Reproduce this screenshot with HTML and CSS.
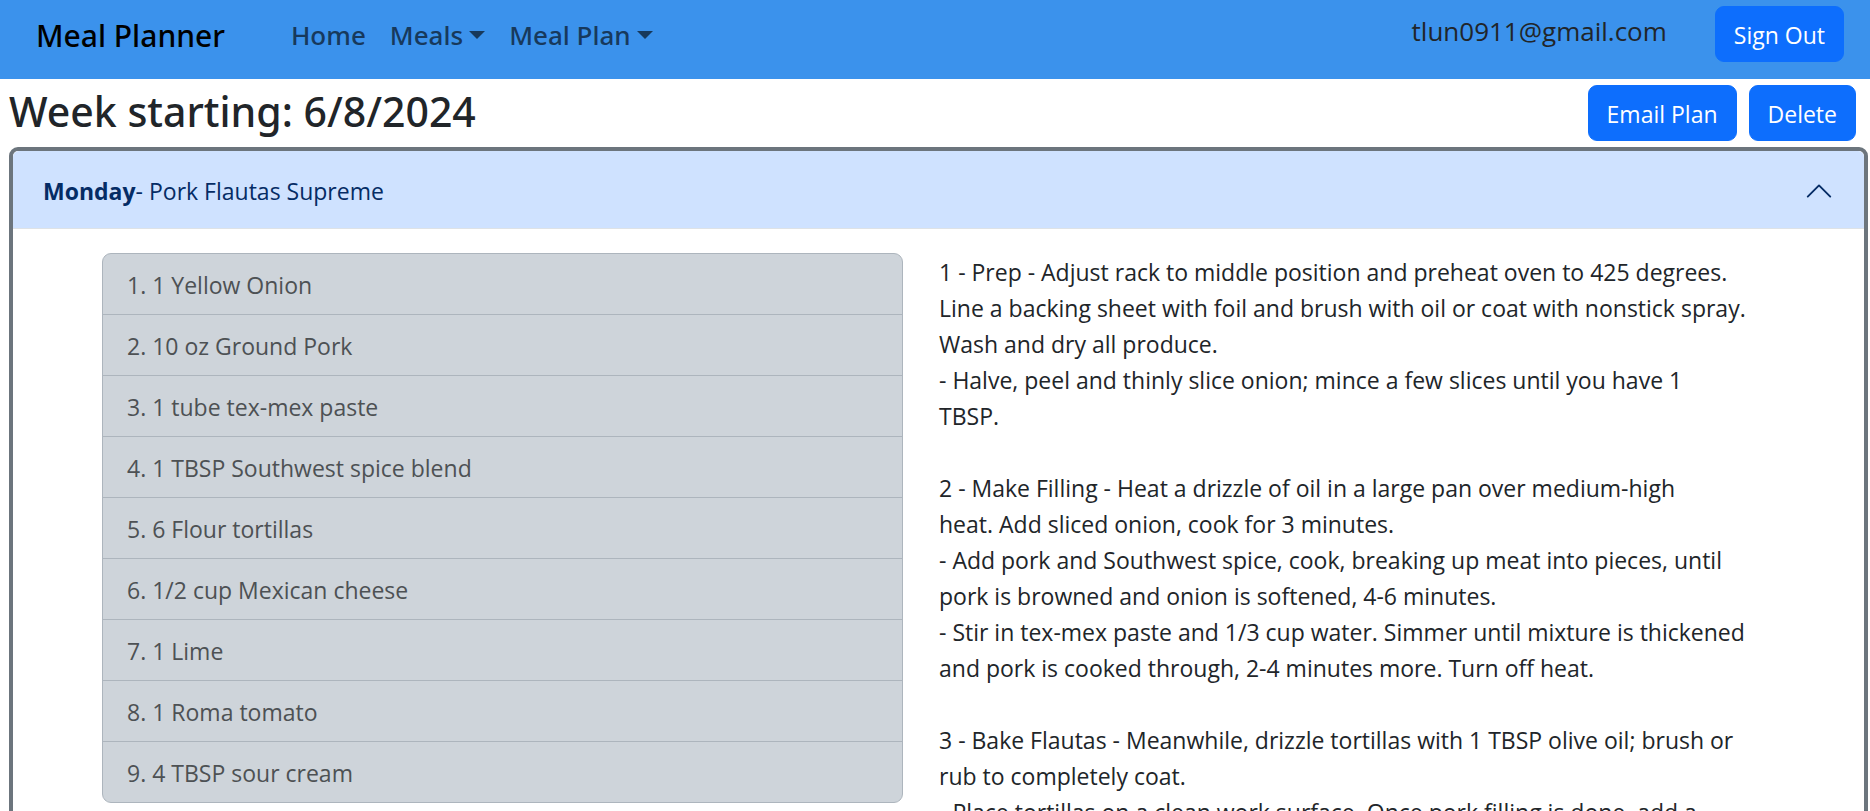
FILE: index.html
```html
<!DOCTYPE html>
<html lang="en">
<head>
<meta charset="utf-8">
<meta name="viewport" content="width=device-width, initial-scale=1">
<title>Meal Planner</title>
<link rel="stylesheet" href="styles.css">
</head>
<body>
<header class="navbar">
  <a class="brand" href="#">Meal Planner</a>
  <nav class="nav-links">
    <a class="nav-link" href="#">Home</a>
    <button class="nav-link dropdown" type="button">Meals</button>
    <button class="nav-link dropdown" type="button">Meal Plan</button>
  </nav>
  <span class="user-email">tlun0911@gmail.com</span>
  <button class="btn" type="button">Sign Out</button>
</header>
<main class="page">
  <div class="plan-head">
    <h1 class="plan-title">Week starting: 6/8/2024</h1>
    <div class="plan-actions">
      <button class="btn" type="button">Email Plan</button>
      <button class="btn" type="button">Delete</button>
    </div>
  </div>
  <section class="accordion">
    <h2 class="accordion-header">
      <button class="accordion-button" type="button" aria-expanded="true" aria-controls="monday">
        <span class="accordion-label"><strong>Monday</strong>- Pork Flautas Supreme</span>
        <svg class="chevron" viewBox="0 0 16 16" fill="none" stroke="currentColor" stroke-linecap="round" stroke-linejoin="round" aria-hidden="true"><path d="M2 11 8 5l6 6"/></svg>
      </button>
    </h2>
    <div class="accordion-body" id="monday">
      <ol class="ingredients">
        <li>1 Yellow Onion</li>
        <li>10 oz Ground Pork</li>
        <li>1 tube tex-mex paste</li>
        <li>1 TBSP Southwest spice blend</li>
        <li>6 Flour tortillas</li>
        <li>1/2 cup Mexican cheese</li>
        <li>1 Lime</li>
        <li>1 Roma tomato</li>
        <li>4 TBSP sour cream</li>
      </ol>
      <p class="steps">1 - Prep - Adjust rack to middle position and preheat oven to 425 degrees.
Line a backing sheet with foil and brush with oil or coat with nonstick spray.
Wash and dry all produce.
- Halve, peel and thinly slice onion; mince a few slices until you have 1
TBSP.

2 - Make Filling - Heat a drizzle of oil in a large pan over medium-high
heat. Add sliced onion, cook for 3 minutes.
- Add pork and Southwest spice, cook, breaking up meat into pieces, until
pork is browned and onion is softened, 4-6 minutes.
- Stir in tex-mex paste and 1/3 cup water. Simmer until mixture is thickened
and pork is cooked through, 2-4 minutes more. Turn off heat.

3 - Bake Flautas - Meanwhile, drizzle tortillas with 1 TBSP olive oil; brush or
rub to completely coat.
- Place tortillas on a clean work surface. Once pork filling is done, add a</p>
    </div>
  </section>
</main>
</body>
</html>
```

FILE: styles.css
```css
* {
  box-sizing: border-box;
}

html {
  scrollbar-width: none;
}

body {
  margin: 0;
  background: #fff;
  color: #212529;
  font-family: "Open Sans", "Noto Sans", sans-serif;
  font-size: 23px;
  line-height: 36px;
}

button {
  font: inherit;
  cursor: pointer;
}

.navbar {
  display: flex;
  align-items: flex-start;
  background: #3b92ec;
  padding: 6px 26px 14px 36px;
}

.brand {
  color: #000;
  font-family: "Noto Sans", sans-serif;
  font-size: 30px;
  font-weight: 500;
  line-height: 59px;
  text-decoration: none;
}

.nav-links {
  display: flex;
  gap: 24px;
  margin-left: 66px;
}

.nav-link {
  display: flex;
  align-items: center;
  border: 0;
  padding: 0;
  background: none;
  color: #17395c;
  font-family: "Noto Sans", sans-serif;
  font-size: 26px;
  font-weight: 500;
  line-height: 59px;
  text-decoration: none;
}

.dropdown::after {
  content: "";
  margin-left: 6px;
  margin-bottom: 2px;
  border-top: 8px solid;
  border-left: 8px solid transparent;
  border-right: 8px solid transparent;
}

.user-email {
  margin-left: auto;
  margin-right: 48px;
  font-size: 26px;
  line-height: 51px;
}

.btn {
  border: 1px solid #0d6efd;
  border-radius: 9px;
  padding: 10px 18px 8px;
  background: #0d6efd;
  color: #fff;
}

.page {
  padding: 6px 2px 24px 9px;
}

.plan-head {
  display: flex;
  align-items: flex-start;
  justify-content: space-between;
  padding: 0 12px 6px 0;
}

.plan-title {
  margin: 0;
  font-family: "Noto Sans", sans-serif;
  font-size: 41px;
  font-weight: 500;
  line-height: 52px;
}

.plan-actions {
  display: flex;
  gap: 12px;
}

.accordion {
  border: 4px solid #6c757d;
  border-radius: 9px;
}

.accordion-header {
  margin: 0;
  font-size: 23px;
  font-weight: 400;
}

.accordion-button {
  display: flex;
  align-items: center;
  justify-content: space-between;
  width: 100%;
  border: 0;
  border-bottom: 1px solid #dee2e6;
  border-radius: 6px 6px 0 0;
  padding: 22px 30px 19px;
  background: #cfe2ff;
  color: #052c65;
  text-align: left;
}

.chevron {
  width: 30px;
  height: 30px;
}

.accordion-body {
  display: grid;
  grid-template-columns: 1fr 1fr;
  gap: 36px;
  align-items: start;
  padding: 24px 124px 24px 89px;
}

.ingredients {
  margin: 0;
  border: 1px solid #adb5bd;
  border-radius: 9px;
  padding: 0;
  background: #ced4da;
  color: #4d5154;
  counter-reset: item;
}

.ingredients li {
  padding: 13px 24px 11px;
  list-style: none;
  counter-increment: item;
}

.ingredients li::before {
  content: counter(item) ". ";
}

.ingredients li + li {
  border-top: 1px solid #adb5bd;
}

.steps {
  margin: 1px -36px 0 0;
  white-space: pre-line;
}
```
